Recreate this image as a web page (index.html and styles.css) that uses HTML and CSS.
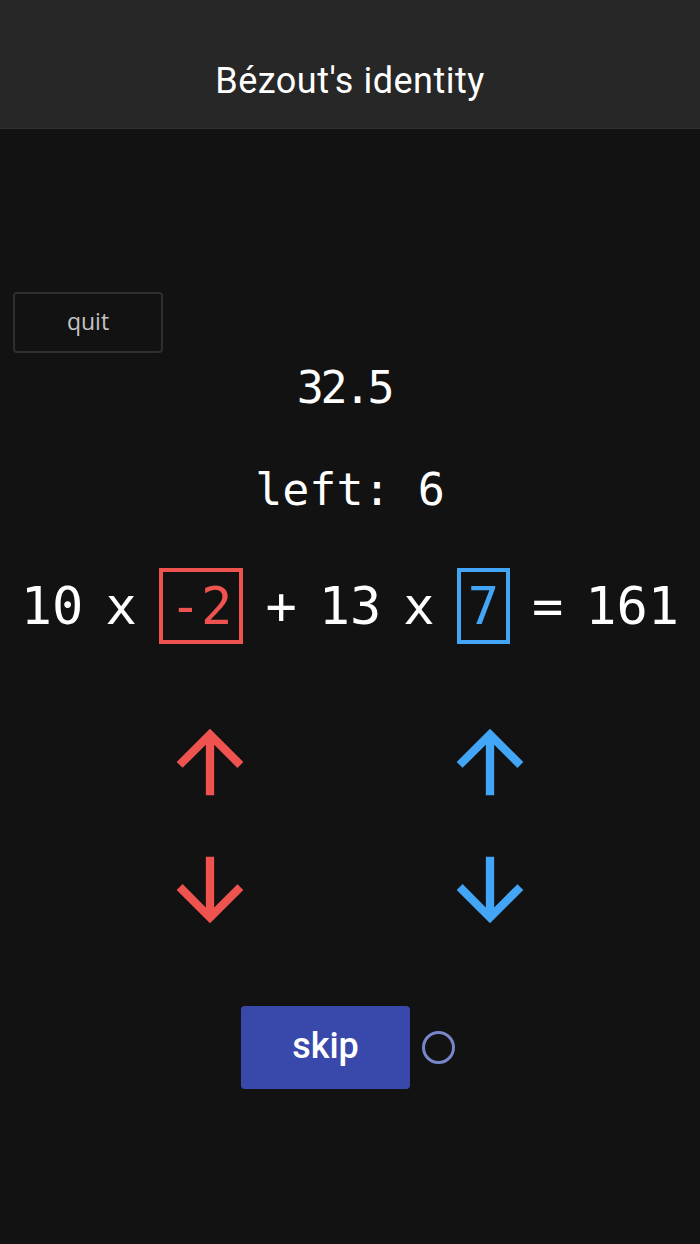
FILE: index.html
```html
<!DOCTYPE html>
<html lang="en">
<head>
<meta charset="utf-8">
<title>Bézout's identity</title>
<link rel="stylesheet" href="styles.css">
</head>
<body>
<header class="app-bar">
  <h1 class="app-title">Bézout's identity</h1>
</header>
<main class="game">
  <div class="toolbar">
    <button class="quit-btn" type="button">quit</button>
  </div>
  <div class="score">32.5</div>
  <div class="remaining">left: 6</div>
  <div class="equation">
    <span class="term">10</span>
    <span class="term">x</span>
    <span class="coef coef-a">-2</span>
    <span class="term">+</span>
    <span class="term">13</span>
    <span class="term">x</span>
    <span class="coef coef-b">7</span>
    <span class="term">=</span>
    <span class="term">161</span>
  </div>
  <div class="controls">
    <div class="control-col col-a">
      <button class="arrow-btn" type="button" aria-label="increase">
        <svg viewBox="0 0 24 24"><path d="M4 12l1.41 1.41L11 7.83V20h2V7.83l5.58 5.59L20 12l-8-8-8 8z"/></svg>
      </button>
      <button class="arrow-btn" type="button" aria-label="decrease">
        <svg viewBox="0 0 24 24"><path d="M20 12l-1.41-1.41L13 16.17V4h-2v12.17l-5.58-5.59L4 12l8 8 8-8z"/></svg>
      </button>
    </div>
    <div class="control-col col-b">
      <button class="arrow-btn" type="button" aria-label="increase">
        <svg viewBox="0 0 24 24"><path d="M4 12l1.41 1.41L11 7.83V20h2V7.83l5.58 5.59L20 12l-8-8-8 8z"/></svg>
      </button>
      <button class="arrow-btn" type="button" aria-label="decrease">
        <svg viewBox="0 0 24 24"><path d="M20 12l-1.41-1.41L13 16.17V4h-2v12.17l-5.58-5.59L4 12l8 8 8-8z"/></svg>
      </button>
    </div>
  </div>
  <div class="actions">
    <button class="skip-btn" type="button">skip</button>
    <span class="spinner"></span>
  </div>
</main>
</body>
</html>
```

FILE: styles.css
```css
* {
  box-sizing: border-box;
}

html, body {
  margin: 0;
  padding: 0;
  background: #121212;
  color: #ffffff;
}

body {
  width: 700px;
  min-height: 1244px;
  font-family: Roboto, "Noto Sans", sans-serif;
}

.app-bar {
  height: 129px;
  background: #272727;
  border-bottom: 1px solid #2e2e2e;
  display: flex;
  align-items: center;
  justify-content: center;
  padding-top: 34px;
}

.app-title {
  margin: 0;
  font-family: Roboto, sans-serif;
  font-weight: 400;
  font-size: 36px;
  letter-spacing: 0.5px;
  color: #ffffff;
}

.game {
  display: flex;
  flex-direction: column;
  align-items: stretch;
}

.toolbar {
  display: flex;
  padding: 163px 0 0 13px;
}

.quit-btn {
  width: 150px;
  height: 61px;
  background: transparent;
  border: 2px solid #2e2e2e;
  border-radius: 4px;
  color: #c4c4c4;
  font-family: "Open Sans", "Noto Sans", sans-serif;
  font-weight: 500;
  font-size: 23px;
  padding: 0 0 4px;
}

.score,
.remaining,
.equation {
  font-family: "DejaVu Sans Mono", monospace;
  color: #ffffff;
  text-align: center;
}

.score {
  font-size: 45px;
  line-height: 60px;
  letter-spacing: -3.5px;
  padding-right: 12px;
  margin-top: 5px;
}

.remaining {
  font-size: 45px;
  line-height: 60px;
  margin-top: 42px;
}

.equation {
  display: flex;
  justify-content: center;
  align-items: center;
  gap: 22px;
  font-size: 52px;
  height: 76px;
  margin-top: 48px;
}

.term {
  line-height: 76px;
}

.coef {
  display: flex;
  align-items: center;
  justify-content: center;
  height: 76px;
  padding: 0 7px;
  border: 4px solid currentColor;
  line-height: 1;
}

.coef-a {
  color: #ef5350;
}

.coef-b {
  color: #42a5f5;
}

.controls {
  display: flex;
  justify-content: center;
  gap: 180px;
  margin-top: 68px;
}

.control-col {
  display: flex;
  flex-direction: column;
  gap: 28px;
}

.arrow-btn {
  width: 100px;
  height: 100px;
  padding: 0;
  border: 0;
  background: transparent;
}

.arrow-btn svg {
  display: block;
  width: 100px;
  height: 100px;
}

.col-a .arrow-btn svg {
  fill: #ef5350;
}

.col-b .arrow-btn svg {
  fill: #42a5f5;
}

.actions {
  display: flex;
  justify-content: center;
  align-items: center;
  gap: 12px;
  margin-top: 66px;
  padding-right: 4px;
}

.skip-btn {
  width: 169px;
  height: 83px;
  background: #3949ab;
  border: 0;
  border-radius: 4px;
  color: #ffffff;
  font-family: Roboto, sans-serif;
  font-weight: 500;
  font-size: 36px;
  padding: 0 0 4px;
}

.spinner {
  width: 33px;
  height: 33px;
  border: 3px solid #7986cb;
  border-radius: 50%;
}
```
